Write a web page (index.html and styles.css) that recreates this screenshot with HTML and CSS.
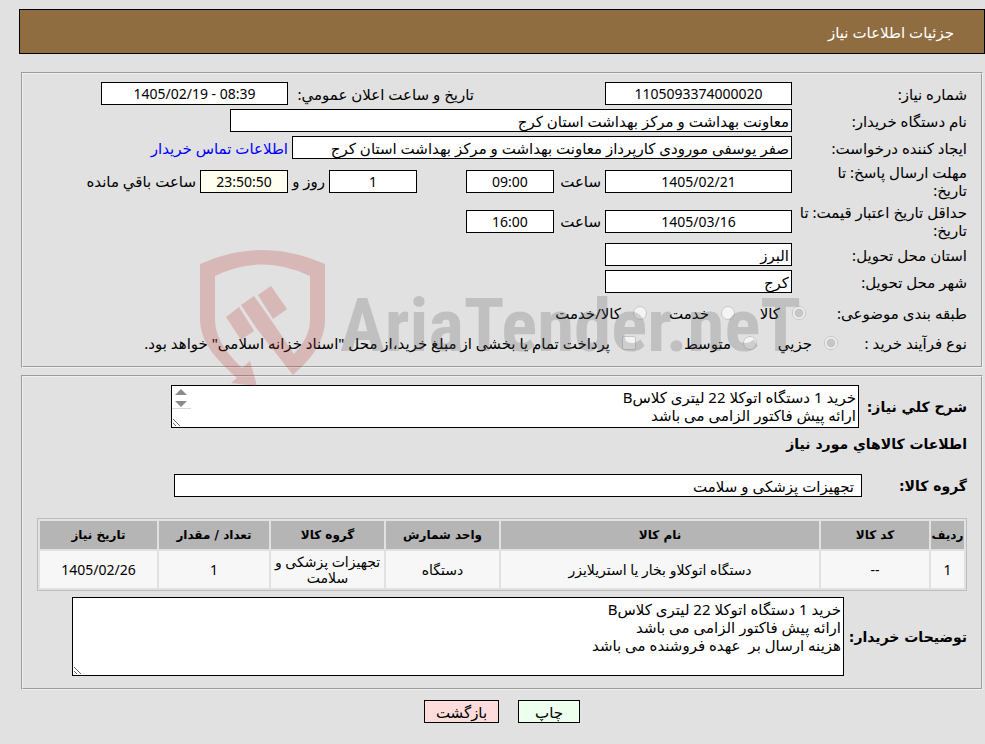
FILE: index.html
```html
<!DOCTYPE html>
<html lang="fa" dir="rtl">
<head>
    <meta charset="utf-8">
    <title>جزئیات اطلاعات نیاز</title>
    <link rel="stylesheet" href="styles.css">
</head>
<body>
    <div class="header">جزئیات اطلاعات نیاز</div>

    <fieldset class="box info">
        <div class="row">
            <label class="title" for="need_no">شماره نیاز:</label>
            <input class="w_date ltr" type="text" id="need_no" value="1105093374000020" readonly>
            <label class="announce" for="announce">تاریخ و ساعت اعلان عمومي:</label>
            <input class="w_date ltr" type="text" id="announce" value="1405/02/19 - 08:39" readonly>
        </div>
        <div class="row">
            <label class="title" for="buyer">نام دستگاه خریدار:</label>
            <input class="w_buyer" type="text" id="buyer" value="معاونت بهداشت و مرکز بهداشت استان کرج" readonly>
        </div>
        <div class="row">
            <label class="title" for="creator">ایجاد کننده درخواست:</label>
            <input class="w_creator" type="text" id="creator" value="صفر یوسفی مورودی کارپرداز معاونت بهداشت و مرکز بهداشت استان کرج" readonly>
            <a href="#none">اطلاعات تماس خریدار</a>
        </div>
        <div class="row">
            <label class="title" for="reply_date">مهلت ارسال پاسخ: تا<br>تاریخ:</label>
            <input class="w_date ltr" type="text" id="reply_date" value="1405/02/21" readonly>
            <label class="hour" for="reply_hour">ساعت</label>
            <input class="w_hour ltr" type="text" id="reply_hour" value="09:00" readonly>
            <input class="w_hour ltr day" type="text" id="days" value="1" readonly>
            <label class="and" for="days">روز و</label>
            <input class="w_hour ltr remain" type="text" id="remain" value="23:50:50" readonly>
            <label for="remain">ساعت باقي مانده</label>
        </div>
        <div class="row">
            <label class="title" for="price_date">حداقل تاریخ اعتبار قیمت: تا<br>تاریخ:</label>
            <input class="w_date ltr" type="text" id="price_date" value="1405/03/16" readonly>
            <label class="hour" for="price_hour">ساعت</label>
            <input class="w_hour ltr" type="text" id="price_hour" value="16:00" readonly>
        </div>
        <div class="row">
            <label class="title" for="province">استان محل تحویل:</label>
            <input class="w_date" type="text" id="province" value="البرز" readonly>
        </div>
        <div class="row">
            <label class="title" for="city">شهر محل تحویل:</label>
            <input class="w_date" type="text" id="city" value="کرج" readonly>
        </div>
        <div class="options">
            <div class="option_row">
                <span class="title kind">طبقه بندی موضوعی:</span>
                <div class="kinds">
                    <label><input type="radio" name="kind" checked disabled>کالا</label>
                    <label><input type="radio" name="kind" disabled>خدمت</label>
                    <label><input type="radio" name="kind" disabled>کالا/خدمت</label>
                </div>
            </div>
            <div class="option_row">
                <span class="title process">نوع فرآیند خرید :</span>
                <div class="processes">
                    <label><input type="radio" name="process" checked disabled>جزیي</label>
                    <label><input type="radio" name="process" disabled>متوسط</label>
                    <label><input type="checkbox" name="treasury" disabled>پرداخت تمام یا بخشی از مبلغ خرید،از محل "اسناد خزانه اسلامی" خواهد بود.</label>
                </div>
            </div>
        </div>
    </fieldset>

    <fieldset class="box goods">
        <div class="row">
            <label class="b_title" for="summary">شرح کلي نیاز:</label>
            <div class="summary_wrap">
                <textarea class="summary" id="summary" readonly>خرید 1 دستگاه اتوکلا 22 لیتری کلاسB
ارائه پیش فاکتور الزامی می باشد</textarea>
                <svg class="arrows" viewBox="0 0 19 22" width="19" height="22">
                    <path fill="#8b8b8b" d="M9 2l6 6H3zM9 20l6-6H3z"/>
                    <path fill="#d9d9d9" d="M0 21h19v1H0z"/>
                </svg>
            </div>
        </div>
        <h2>اطلاعات کالاهاي مورد نیاز</h2>
        <div class="row group_row">
            <label class="b_title g_title" for="group">گروه کالا:</label>
            <input class="w_group" type="text" id="group" value="تجهیزات پزشکی و سلامت" readonly>
        </div>
        <table>
            <thead>
                <tr>
                    <th class="c_row">ردیف</th>
                    <th class="c_code">کد کالا</th>
                    <th>نام کالا</th>
                    <th class="c_unit">واحد شمارش</th>
                    <th class="c_group">گروه کالا</th>
                    <th class="c_count">تعداد / مقدار</th>
                    <th class="c_date">تاریخ نیاز</th>
                </tr>
            </thead>
            <tbody>
                <tr>
                    <td>1</td>
                    <td>--</td>
                    <td>دستگاه اتوکلاو بخار یا استریلایزر</td>
                    <td>دستگاه</td>
                    <td>تجهیزات پزشکی و سلامت</td>
                    <td>1</td>
                    <td>1405/02/26</td>
                </tr>
            </tbody>
        </table>
        <div class="row">
            <label class="b_title n_title" for="notes">توضیحات خریدار:</label>
            <textarea class="notes" id="notes" readonly>خرید 1 دستگاه اتوکلا 22 لیتری کلاسB
ارائه پیش فاکتور الزامی می باشد
هزینه ارسال بر  عهده فروشنده می باشد</textarea>
        </div>
    </fieldset>

    <div class="buttons">
        <button class="print" type="button">چاپ</button>
        <button class="back" type="button">بازگشت</button>
    </div>

    <!-- watermark -->
    <div class="watermark" dir="ltr">
        <svg viewBox="0 0 126 138" width="126" height="138">
            <path fill="#be3232" d="M0 15Q62-13 125 15V70C125 94 109 112 93 126L57 80 41 56 54 47 71 71 94 105C104 94 110 84 110 70V27Q62 4 15 27V70C15 90 28 105 42 119L50 112 57 137 31 134 37 129C18 112 0 94 0 70ZM26 68L39 58 54 82 41 91ZM58 46L71 37 87 60 73 70Z"/>
        </svg>
        <span>AriaTender.neT</span>
    </div>
</body>
</html>
```

FILE: styles.css
```css
body {
    position: relative;
    margin: 0px;
    padding: 9px 0px 20px 19px;
    min-width: 960px;
    box-sizing: border-box;
    background-color: #e1e1e1;
    font-family: Tahoma, "Noto Sans", "DejaVu Sans", sans-serif;
    font-size: 15px;
    line-height: 18px;
    color: #000;
}
input, textarea, button {
    margin: 0px;
    box-sizing: border-box;
    border: 1px solid #000;
    border-radius: 0px;
    font: inherit;
    color: inherit;
    background-color: #fff;
}
a { color: #00f; text-decoration: none; }
.header {
    padding: 13px 30px 12px;
    border: 1px solid #000;
    background-color: #8f6d40;
    color: #fff;
}
/* =============================================== */
.box {
    margin: 0px 2px;
    padding: 8px 14px;
    border: 2px groove #f0f0f0;
    min-width: 0px;
}
.info { margin-top: 18px; }
.goods { margin-top: 7px; }
.row {
    display: flex;
    align-items: center;
    gap: 4px;
    margin-bottom: 4px;
}
.row input {
    height: 23px;
    padding: 0px 2px;
}
.title { flex: 0 0 171px; }
.row .ltr { direction: ltr; text-align: center; font-size: 14px; }
.w_date { width: 187px; }
.w_buyer { width: 562px; }
.w_creator { width: 500px; }
.w_hour { width: 88px; }
.announce { width: 182px; margin-right: 127px; white-space: nowrap; }
.hour { width: 43px; }
.day { margin-right: 45px; }
.and { width: 33px; }
.row .remain { background-color: #fffff0; }
/* =============================================== */
.options { padding-top: 1px; }
.option_row {
    display: flex;
    align-items: center;
    height: 30px;
}
.option_row .kind { flex-basis: 161px; }
.option_row .process { flex-basis: 129px; }
.kinds, .processes { display: grid; white-space: nowrap; }
.kinds { grid-template-columns: 71px 88px auto; }
.processes { grid-template-columns: 81px 121px auto; }
.options label {
    display: flex;
    align-items: center;
    gap: 12px;
}
.options input {
    appearance: none;
    width: 14px;
    height: 14px;
    border: 1px solid #c6c6c6;
    background-color: #f4f4f4;
}
.options input[type='radio'] { border-radius: 50%; }
.options input[type='checkbox'] { border-radius: 2px; }
.options input:checked { background: radial-gradient(circle, #c6c6c6 4px, #f4f4f4 5px); }
/* =============================================== */
.b_title, h2, th { font-family: Tahoma, "DejaVu Sans", sans-serif; font-weight: bold; }
.b_title, h2 { font-size: 14px; }
.b_title { min-width: 104px; white-space: nowrap; }
.g_title { min-width: 101px; }
.n_title { min-width: 119px; }
h2 { margin: 7px 0px 21px; line-height: 18px; }
textarea {
    display: block;
    padding: 2px;
    overflow: hidden;
    resize: both;
}
.summary_wrap { position: relative; flex: 0 0 74%; }
.summary { width: 100%; height: 43px; }
.arrows { position: absolute; left: 1px; top: 2px; }
.row .w_group { width: 74%; padding: 0px 7px; }
.notes { width: 83%; height: 79px; }
.goods .group_row { margin-bottom: 21px; }
table {
    width: 100%;
    margin-bottom: 6px;
    border: 1px solid #bdbdbd;
    border-spacing: 2px;
    table-layout: fixed;
    line-height: 16px;
    text-align: center;
}
th { height: 28px; padding: 0px; font-size: 12px; background-color: #b5b5b5; }
td { height: 37px; padding: 0px 2px; font-size: 14px; background-color: #f7f7f7; }
.c_row { width: 33px; }
.c_code { width: 108px; }
.c_unit, .c_group { width: 113px; }
.c_count { width: 110px; }
.c_date { width: 117px; }
/* =============================================== */
.buttons {
    display: flex;
    justify-content: center;
    gap: 19px;
    margin-top: 10px;
}
.buttons button { height: 23px; padding: 0px 10px; }
.print { width: 62px; background-color: #edffed; }
.back { width: 75px; background-color: #ffdcdc; }
/* =============================================== */
.watermark {
    position: absolute;
    left: 200px;
    top: 249px;
    display: flex;
    align-items: flex-start;
    gap: 14px;
    opacity: 0.23;
    pointer-events: none;
}
.watermark span {
    font-family: "Roboto Condensed", "Open Sans Condensed", "Noto Sans Condensed", Roboto, sans-serif;
    font-size: 75px;
    font-weight: bold;
    line-height: 152px;
    color: #555;
}
```
